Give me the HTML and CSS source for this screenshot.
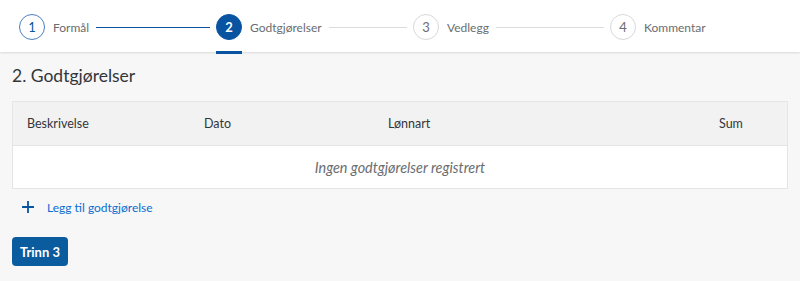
FILE: index.html
```html
<!DOCTYPE html>
<html lang="no">
<head>
<meta charset="utf-8">
<title>Godtgjørelser</title>
<link rel="stylesheet" href="styles.css">
</head>
<body>
<header class="wizard">
  <div class="step done">
    <span class="circle">1</span>
    <span class="label">Formål</span>
    <span class="line"></span>
  </div>
  <div class="step current">
    <span class="circle">2</span>
    <span class="label">Godtgjørelser</span>
    <span class="line"></span>
  </div>
  <div class="step">
    <span class="circle">3</span>
    <span class="label">Vedlegg</span>
    <span class="line"></span>
  </div>
  <div class="step last">
    <span class="circle">4</span>
    <span class="label">Kommentar</span>
  </div>
</header>
<main class="content">
  <h2 class="title">2. Godtgjørelser</h2>
  <div class="table">
    <div class="thead">
      <div class="th">Beskrivelse</div>
      <div class="th">Dato</div>
      <div class="th">Lønnart</div>
      <div class="th">Sum</div>
    </div>
    <div class="empty">Ingen godtgjørelser registrert</div>
  </div>
  <div class="add-row">
    <a class="add-link" href="#">
      <svg class="plus" width="12" height="12" viewBox="0 0 12 12"><path d="M6 0v12M0 6h12" stroke="currentColor" stroke-width="1.8"/></svg>
      <span>Legg til godtgjørelse</span>
    </a>
  </div>
  <button class="next">Trinn 3</button>
</main>
</body>
</html>
```

FILE: styles.css
```css
* { box-sizing: border-box; }
html, body { margin: 0; padding: 0; }
body {
  background: #f7f7f7;
  font-family: Lato, "Noto Sans", sans-serif;
  color: #32363a;
  height: 281px;
  overflow: hidden;
}
.wizard {
  height: 52px;
  background: #ffffff;
  display: flex;
  align-items: center;
  padding: 2px 0 0 19px;
  box-shadow: 0 1px 2px rgba(0, 0, 0, 0.12);
  position: relative;
}
.step {
  display: flex;
  align-items: center;
  width: 197px;
  position: relative;
  height: 26px;
}
.step.last { width: auto; }
.circle {
  width: 26px;
  height: 26px;
  border-radius: 50%;
  border: 1px solid #d9d9d9;
  color: #6a6d70;
  font-size: 13px;
  display: flex;
  align-items: center;
  justify-content: center;
  flex: none;
}
.label {
  margin-left: 8px;
  font-size: 12px;
  color: #6a6d70;
  white-space: nowrap;
}
.line {
  flex: 1;
  height: 1px;
  background: #dcdcdc;
  margin: 0 6px 0 7px;
}
.step.done .circle { border-color: #4a7fc0; color: #0854a0; }
.step.done .line { background: #0854a0; }
.step.current .circle {
  background: #0854a0;
  border-color: #0854a0;
  color: #ffffff;
  font-weight: 700;
}
.step.current::after {
  content: "";
  position: absolute;
  left: 0;
  width: 26px;
  height: 3px;
  bottom: -14px;
  background: #0854a0;
}
.content { padding: 0 12px; }
.title {
  margin: 12px 0 13px;
  font-size: 17.5px;
  font-weight: 400;
  line-height: 24px;
  color: #32363a;
}
.table {
  border: 1px solid #e5e5e5;
  background: #ffffff;
}
.thead {
  display: grid;
  grid-template-columns: 177px 184px 1fr 82px;
  height: 44px;
  background: #f2f2f2;
  border-bottom: 1px solid #e5e5e5;
  align-items: center;
}
.th {
  padding-left: 14px;
  font-size: 12.5px;
  color: #32363a;
}
.empty {
  height: 42px;
  display: flex;
  align-items: center;
  justify-content: center;
  font-style: italic;
  font-size: 14.4px;
  color: #6a6d70;
}
.add-row {
  height: 36px;
  display: flex;
  align-items: center;
}
.add-link {
  display: flex;
  align-items: center;
  text-decoration: none;
  color: #0a6ed1;
  font-size: 12px;
  padding-left: 10px;
}
.plus { color: #0854a0; margin-right: 13px; }
.next {
  margin-top: 12px;
  width: 56px;
  height: 29px;
  border: none;
  border-radius: 4px;
  background: #0a5c9e;
  color: #ffffff;
  font-family: Lato, "Noto Sans", sans-serif;
  font-weight: 700;
  font-size: 13px;
  padding: 0;
}
```
